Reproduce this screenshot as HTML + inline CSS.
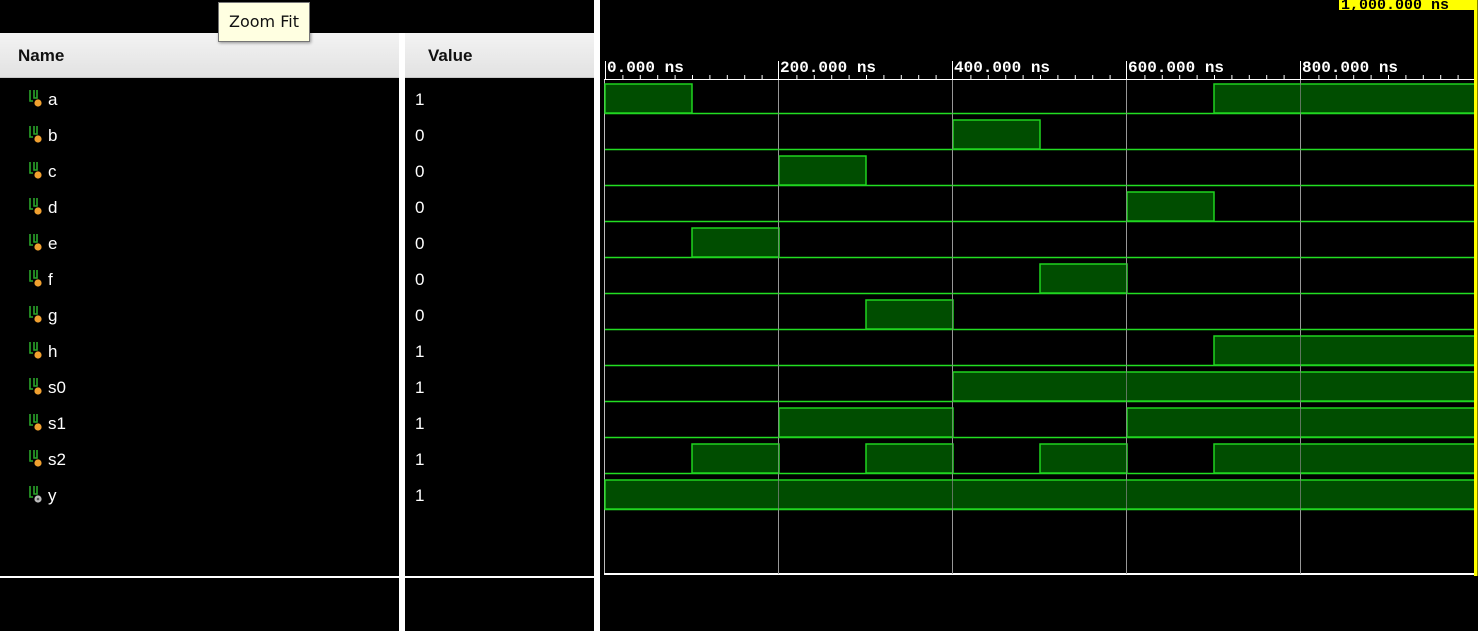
<!DOCTYPE html>
<html><head><meta charset="utf-8"><style>
html,body{margin:0;padding:0;background:#000;width:1478px;height:631px;overflow:hidden;font-family:"Liberation Sans",sans-serif}
.abs{position:absolute}
.hdr{background:linear-gradient(#f3f3f3,#e2e2e2);top:33px;height:45px;border-bottom:1px solid #c8c8c8;font-weight:bold;font-size:17px;color:#111;box-sizing:border-box;font-family:"Liberation Sans",Arial,sans-serif}
</style></head><body>
<div class="abs" style="left:399px;top:33px;width:6px;height:598px;background:#fff"></div>
<div class="abs" style="left:594px;top:0;width:6px;height:631px;background:#fff"></div>
<div class="abs" style="left:0;top:576px;width:399px;height:2px;background:#fff"></div>
<div class="abs" style="left:405px;top:576px;width:189px;height:2px;background:#fff"></div>
<div class="abs hdr" style="left:0;width:399px;padding:13px 0 0 18px"><b>Name</b></div>
<div class="abs hdr" style="left:405px;width:189px;padding:13px 0 0 23px"><b>Value</b></div>
<div class="abs" style="left:218px;top:2px;width:90px;height:38px;background:#ffffe1;border:1px solid #767676;box-shadow:1px 1px 3px rgba(0,0,0,.4);color:#111;line-height:38px;text-align:center;font-family:'DejaVu Sans','Liberation Sans',sans-serif;font-size:16px">Zoom Fit</div>

<svg class="abs" style="left:0;top:0" width="1478" height="631" xmlns="http://www.w3.org/2000/svg">
<defs>
<g id="ic"><path d="M30 90v11h3M34 90v8h3v-8" stroke="#2aa52a" stroke-width="1.6" fill="none"/><circle cx="38" cy="103" r="3.6" fill="#f0a030"/></g>
<g id="ic2"><path d="M30 90v11h3M34 90v8h3v-8" stroke="#2aa52a" stroke-width="1.6" fill="none"/><circle cx="38" cy="103" r="3.6" fill="#bbb"/><circle cx="38" cy="103" r="1.3" fill="#555"/></g>
</defs>
<g font-family="Liberation Sans, sans-serif" font-size="17" fill="#fff">
<use href="#ic" y="0"/><text x="48" y="105">a</text><text x="415" y="105">1</text>
<use href="#ic" y="36"/><text x="48" y="141">b</text><text x="415" y="141">0</text>
<use href="#ic" y="72"/><text x="48" y="177">c</text><text x="415" y="177">0</text>
<use href="#ic" y="108"/><text x="48" y="213">d</text><text x="415" y="213">0</text>
<use href="#ic" y="144"/><text x="48" y="249">e</text><text x="415" y="249">0</text>
<use href="#ic" y="180"/><text x="48" y="285">f</text><text x="415" y="285">0</text>
<use href="#ic" y="216"/><text x="48" y="321">g</text><text x="415" y="321">0</text>
<use href="#ic" y="252"/><text x="48" y="357">h</text><text x="415" y="357">1</text>
<use href="#ic" y="288"/><text x="48" y="393">s0</text><text x="415" y="393">1</text>
<use href="#ic" y="324"/><text x="48" y="429">s1</text><text x="415" y="429">1</text>
<use href="#ic" y="360"/><text x="48" y="465">s2</text><text x="415" y="465">1</text>
<use href="#ic2" y="396"/><text x="48" y="501">y</text><text x="415" y="501">1</text>
</g>
<g stroke="#bbb" stroke-width="1">
<line x1="604.5" y1="80" x2="604.5" y2="574"/>
<line x1="778.5" y1="80" x2="778.5" y2="574"/>
<line x1="952.5" y1="80" x2="952.5" y2="574"/>
<line x1="1126.5" y1="80" x2="1126.5" y2="574"/>
<line x1="1300.5" y1="80" x2="1300.5" y2="574"/>
</g>
<line x1="604" y1="574" x2="1476" y2="574" stroke="#fff" stroke-width="2"/>
<line x1="604" y1="79.5" x2="1476" y2="79.5" stroke="#fff" stroke-width="1"/>
<g stroke="#fff" stroke-width="1">
<path d="M605.5 75v4M622.9 75v4M640.3 75v4M657.7 75v4M675.1 75v4M692.5 75v4M709.9 75v4M727.3 75v4M744.7 75v4M762.1 75v4M796.9 75v4M814.3 75v4M831.7 75v4M849.1 75v4M866.5 75v4M883.9 75v4M901.3 75v4M918.7 75v4M936.1 75v4M970.9 75v4M988.3 75v4M1005.7 75v4M1023.1 75v4M1040.5 75v4M1057.9 75v4M1075.3 75v4M1092.7 75v4M1110.1 75v4M1144.9 75v4M1162.3 75v4M1179.7 75v4M1197.1 75v4M1214.5 75v4M1231.9 75v4M1249.3 75v4M1266.7 75v4M1284.1 75v4M1318.9 75v4M1336.3 75v4M1353.7 75v4M1371.1 75v4M1388.5 75v4M1405.9 75v4M1423.3 75v4M1440.7 75v4M1458.1 75v4"/>
<path d="M605.5 61v18M778.5 61v18M952.5 61v18M1126.5 61v18M1300.5 61v18"/>
</g>
<g font-family="Liberation Mono, monospace" font-weight="bold" font-size="16" fill="#fff">
<text x="607" y="72">0.000 ns</text>
<text x="780" y="72">200.000 ns</text>
<text x="954" y="72">400.000 ns</text>
<text x="1128" y="72">600.000 ns</text>
<text x="1302" y="72">800.000 ns</text>
</g>
<g stroke="#22dd22" stroke-width="1.5">
<line x1="605" x2="1474" y1="113.5" y2="113.5"/>
<line x1="605" x2="1474" y1="149.5" y2="149.5"/>
<line x1="605" x2="1474" y1="185.5" y2="185.5"/>
<line x1="605" x2="1474" y1="221.5" y2="221.5"/>
<line x1="605" x2="1474" y1="257.5" y2="257.5"/>
<line x1="605" x2="1474" y1="293.5" y2="293.5"/>
<line x1="605" x2="1474" y1="329.5" y2="329.5"/>
<line x1="605" x2="1474" y1="365.5" y2="365.5"/>
<line x1="605" x2="1474" y1="401.5" y2="401.5"/>
<line x1="605" x2="1474" y1="437.5" y2="437.5"/>
<line x1="605" x2="1474" y1="473.5" y2="473.5"/>
<line x1="605" x2="1474" y1="509.5" y2="509.5"/>
</g>
<g fill="#004d00" stroke="#1fd41f" stroke-width="1.5">
<rect x="605" y="84" width="87" height="29"/><rect x="1214" y="84" width="261" height="29"/>
<rect x="953" y="120" width="87" height="29"/>
<rect x="779" y="156" width="87" height="29"/>
<rect x="1127" y="192" width="87" height="29"/>
<rect x="692" y="228" width="87" height="29"/>
<rect x="1040" y="264" width="87" height="29"/>
<rect x="866" y="300" width="87" height="29"/>
<rect x="1214" y="336" width="261" height="29"/>
<rect x="953" y="372" width="522" height="29"/>
<rect x="779" y="408" width="174" height="29"/><rect x="1127" y="408" width="348" height="29"/>
<rect x="692" y="444" width="87" height="29"/><rect x="866" y="444" width="87" height="29"/><rect x="1040" y="444" width="87" height="29"/><rect x="1214" y="444" width="261" height="29"/>
<rect x="605" y="480" width="870" height="29"/>
</g>
<g stroke="#888" stroke-width="1" opacity="0.7">
<line x1="778.5" y1="80" x2="778.5" y2="574"/>
<line x1="952.5" y1="80" x2="952.5" y2="574"/>
<line x1="1126.5" y1="80" x2="1126.5" y2="574"/>
<line x1="1300.5" y1="80" x2="1300.5" y2="574"/>
</g>
<rect x="1474" y="0" width="3.5" height="576" fill="#ffff00"/>
<rect x="1339" y="0" width="136" height="10" fill="#ffff00"/>
<text x="1341" y="9" font-family="Liberation Mono, monospace" font-weight="bold" font-size="15" fill="#000">1,000.000 ns</text>
</svg>
</body></html>
